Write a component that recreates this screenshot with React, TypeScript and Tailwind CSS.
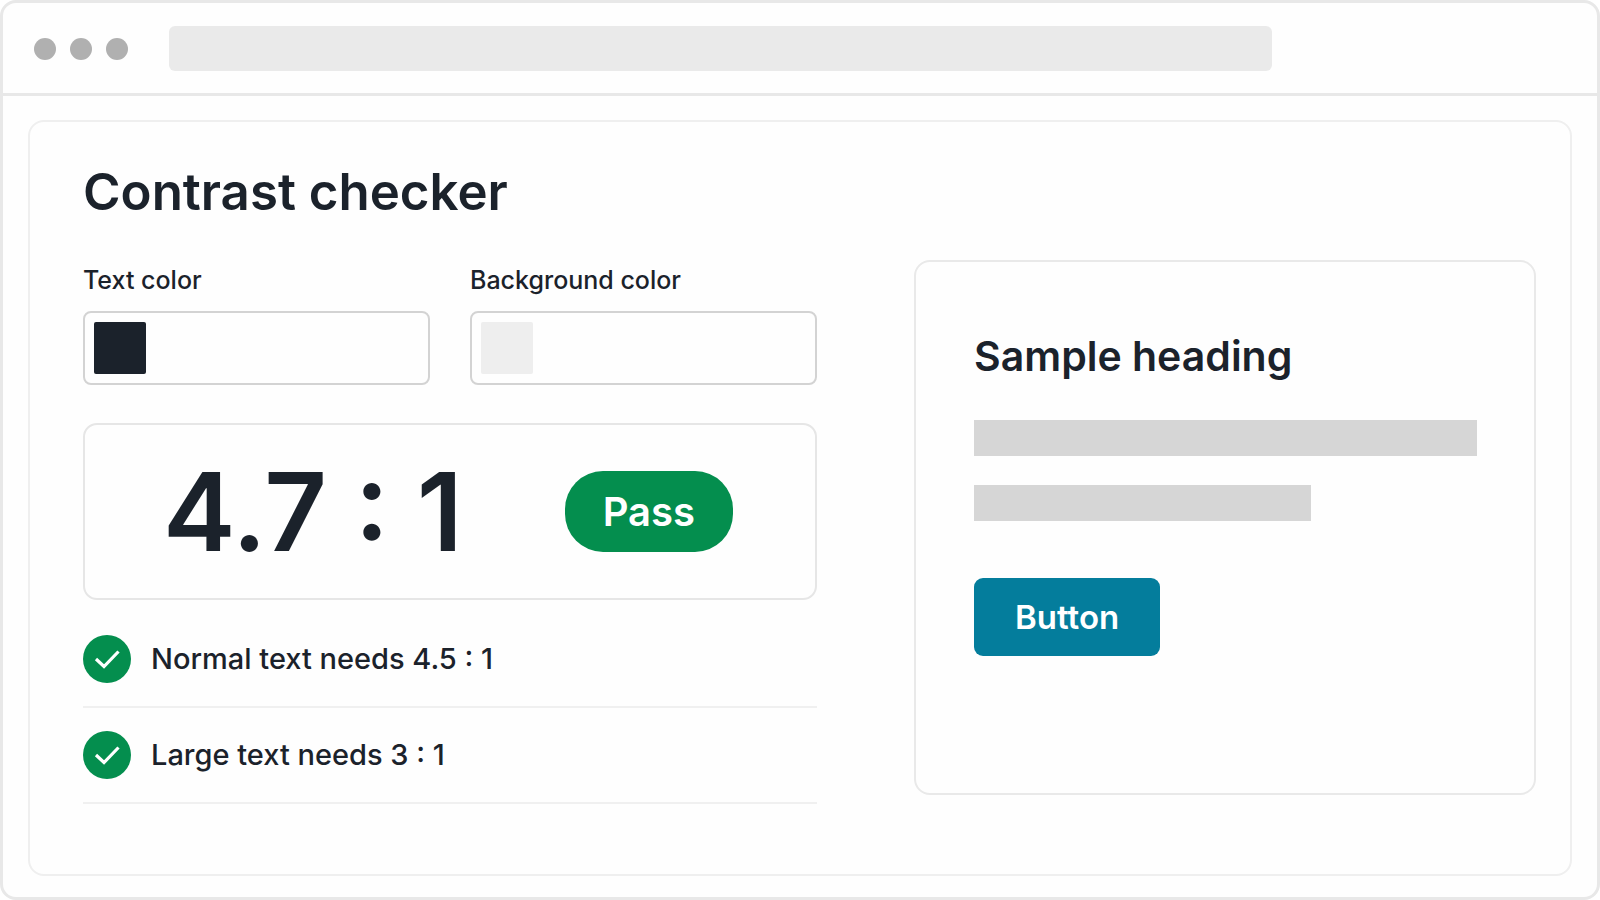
import React, { useState } from "react";

interface ColorFieldProps {
  id: string;
  label: string;
  swatchClass: string;
}

const ColorField: React.FC<ColorFieldProps> = ({ id, label, swatchClass }) => {
  const [value, setValue] = useState("");

  return (
    <div className="min-w-0 flex-1">
      <label htmlFor={id} className="block text-[25px] leading-10 font-medium">
        {label}
      </label>
      <div className="mt-[11px] flex items-center gap-3 rounded-lg border-2 border-[#d3d3d3] p-[9px]">
        <span className={`size-[52px] shrink-0 rounded-xs ${swatchClass}`} />
        <input
          id={id}
          type="text"
          value={value}
          onChange={(e) => setValue(e.target.value)}
          className="w-full min-w-0 bg-transparent text-[25px] outline-none"
        />
      </div>
    </div>
  );
};

const CheckRow: React.FC<{ children: React.ReactNode }> = ({ children }) => (
  <li className="flex h-24 items-center gap-5 border-b-2 border-[#f0f0f0] text-[29px] font-medium">
    <svg viewBox="0 0 48 48" className="size-12 shrink-0" aria-hidden="true">
      <circle cx="24" cy="24" r="24" fill="#048e4e" />
      <path
        d="M13 24 L21 31.5 L35.5 16.5"
        fill="none"
        stroke="#fff"
        strokeWidth="3.2"
      />
    </svg>
    {children}
  </li>
);

const App: React.FC = () => (
  <div className="min-h-screen bg-white font-['Inter',sans-serif] text-[#1b222b]">
    <div className="flex min-h-screen flex-col rounded-2xl border-3 border-[#e8e8e8] bg-[#fefefe]">
      <header className="flex items-center border-b-3 border-[#e8e8e8] px-[31px] pt-[23px] pb-[22px]">
        <div className="flex gap-[14px]">
          <span className="size-[22px] rounded-full bg-[#b0b0b0]" />
          <span className="size-[22px] rounded-full bg-[#b0b0b0]" />
          <span className="size-[22px] rounded-full bg-[#b0b0b0]" />
        </div>
        <div className="ml-[41px] h-[45px] w-[72%] rounded-md bg-[#eaeaea]" />
      </header>

      <main className="mx-[25px] mt-6 mb-[21px] flex-1 rounded-2xl border-2 border-[#efefef] pt-10 pr-[34px] pl-[53px]">
        <h1 className="text-[51px] leading-[60px] font-semibold">
          Contrast checker
        </h1>

        <div className="mt-[38px] grid grid-cols-[734fr_622fr] gap-[97px]">
          <section>
            <div className="flex gap-10">
              <ColorField
                id="text-color"
                label="Text color"
                swatchClass="bg-[#1b222b]"
              />
              <ColorField
                id="background-color"
                label="Background color"
                swatchClass="bg-[#eeeeee]"
              />
            </div>

            <div className="mt-[38px] flex h-[177px] items-center justify-between rounded-[14px] border-2 border-[#e6e6e6] pr-[82px] pl-[78px]">
              <p className="text-[109px] leading-none font-semibold whitespace-nowrap">
                4.7 : 1
              </p>
              <span className="rounded-[38px] bg-[#048e4e] px-[38px] py-[15px] text-[40px] leading-[51px] font-semibold text-white">
                Pass
              </span>
            </div>

            <ul className="mt-3">
              <CheckRow>Normal text needs 4.5 : 1</CheckRow>
              <CheckRow>Large text needs 3 : 1</CheckRow>
            </ul>
          </section>

          <section className="mb-[9px] rounded-2xl border-2 border-[#e9e9e9] pt-[68px] pr-[57px] pl-[58px]">
            <h2 className="text-[41px] leading-[52px] font-semibold">
              Sample heading
            </h2>
            <div className="mt-[38px] h-9 bg-[#d6d6d6]" />
            <div className="mt-[29px] h-9 w-[67%] bg-[#d6d6d6]" />
            <button
              type="button"
              className="mt-[57px] rounded-[9px] bg-[#047d9c] px-[41px] py-[19px] text-[33px] leading-10 font-semibold text-white"
            >
              Button
            </button>
          </section>
        </div>
      </main>
    </div>
  </div>
);

export default App;
